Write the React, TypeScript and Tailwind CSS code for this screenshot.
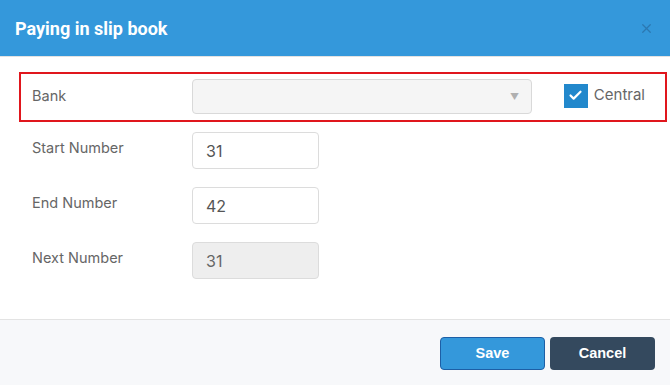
import { Check, X } from "lucide-react";

const rows = [
  { label: "Start Number", value: "31", disabled: false },
  { label: "End Number", value: "42", disabled: false },
  { label: "Next Number", value: "31", disabled: true },
];

export default function App() {
  return (
    <div className="flex h-[385px] w-[670px] flex-col bg-white font-['Inter',sans-serif]">
      <div className="flex h-[56px] shrink-0 items-center justify-between bg-[#3498db] pl-[15px] pr-[16px]">
        <h1 className="font-['Roboto',sans-serif] text-[18px] font-bold text-white">
          Paying in slip book
        </h1>
        <X className="h-[15px] w-[15px] text-[#2b78b1]" strokeWidth={2} />
      </div>

      <div className="flex-1 border-t border-[#e2e2e2] px-[19px] pt-[15px]">
        <div className="flex h-[50px] w-[648px] items-center border-2 border-[#e0161d] pl-[11px] pr-[20px]">
          <span className="-mt-[3px] w-[160px] text-[14.5px] text-[#666]">Bank</span>
          <div className="-mt-[1px] flex h-[35px] w-[340px] items-center justify-end rounded-[4px] border border-[#d9d9d9] bg-[#f5f5f5] pr-[12px]">
            <span className="text-[9px] text-[#b0b0b0]">▼</span>
          </div>
          <div className="ml-auto -mt-[3px] flex items-center gap-[6px]">
            <div className="flex h-[24px] w-[24px] items-center justify-center bg-[#2288cc]">
              <Check className="h-[15px] w-[15px] text-white" strokeWidth={3.5} />
            </div>
            <span className="text-[15px] text-[#666]">Central</span>
          </div>
        </div>

        <div className="mt-[10px] flex flex-col gap-[18px] pl-[13px]">
          {rows.map((row) => (
            <div key={row.label} className="flex items-start">
              <span className="w-[160px] pt-[5px] text-[14.5px] text-[#666]">{row.label}</span>
              <div
                className={
                  row.disabled
                    ? "flex h-[37px] w-[127px] items-center rounded-[4px] border border-[#dcdcdc] bg-[#eeeeee] pl-[13px] text-[16px] text-[#666]"
                    : "flex h-[37px] w-[127px] items-center rounded-[4px] border border-[#dcdcdc] bg-white pl-[13px] text-[16px] text-[#555]"
                }
              >
                {row.value}
              </div>
            </div>
          ))}
        </div>
      </div>

      <div className="flex h-[66px] shrink-0 items-start justify-end gap-[5px] border-t border-[#e3e3e3] bg-[#f7f8fa] pr-[15px] pt-[17px] font-['Liberation_Sans',sans-serif]">
        <button className="h-[33px] w-[105px] rounded-[4px] border border-[#1d5fa6] bg-[#3498db] text-[14.5px] font-bold text-white">
          Save
        </button>
        <button className="h-[33px] w-[105px] rounded-[4px] bg-[#34495e] text-[14.5px] font-bold text-white">
          Cancel
        </button>
      </div>
    </div>
  );
}
